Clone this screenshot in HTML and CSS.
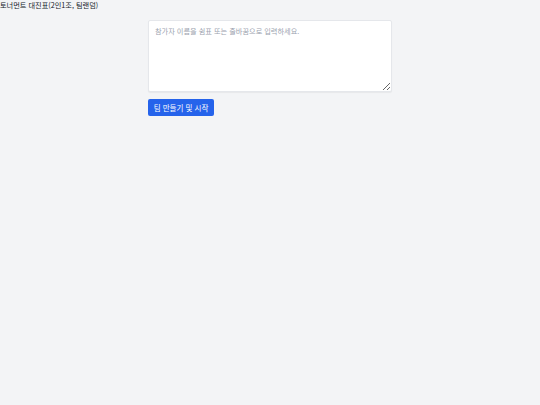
FILE: index.html
```html
<!DOCTYPE html>
<html lang="ko">
<head>
<meta charset="utf-8">
<link rel="stylesheet" href="styles.css">
</head>
<body>
<h1 class="title">토너먼트 대진표(2인1조, 팀랜덤)</h1>
<main class="panel">
  <textarea class="names" placeholder="참가자 이름을 쉼표 또는 줄바꿈으로 입력하세요."></textarea>
  <button class="start">팀 만들기 및 시작</button>
</main>
</body>
</html>
```
FILE: styles.css
```css
html, body { margin: 0; padding: 0; }
body {
  background: #f3f4f6;
  font-family: "Noto Sans CJK KR", "Noto Sans", sans-serif;
  color: #111827;
  width: 540px;
  height: 405px;
}
.title {
  margin: 0;
  padding: 0;
  font-size: 7.2px;
  line-height: 11px;
  font-weight: 400;
}
.panel {
  width: 244px;
  margin: 9px auto 0;
  display: flex;
  flex-direction: column;
  align-items: flex-start;
  gap: 7px;
}
.names {
  box-sizing: border-box;
  width: 244px;
  height: 72px;
  border: 1px solid #e5e7eb;
  border-radius: 2px;
  background: #fff;
  box-shadow: 0 1px 1px rgba(0,0,0,0.05);
  padding: 5px 6px;
  font-family: inherit;
  font-size: 7.2px;
  line-height: 10px;
  margin: 0;
  resize: vertical;
}
.names::placeholder { color: #9ca3af; }
.start {
  box-sizing: border-box;
  height: 17px;
  width: 66px;
  padding: 0;
  border: none;
  border-radius: 2px;
  background: #2563eb;
  color: #fff;
  font-family: inherit;
  font-size: 7.5px;
}
```
